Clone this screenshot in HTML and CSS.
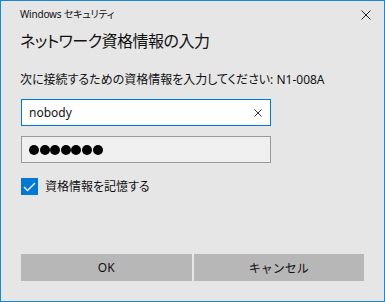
FILE: index.html
```html
<!DOCTYPE html>
<html lang="ja">

<head>
    <meta charset="UTF-8">
    <meta name="viewport" content="width=device-width, initial-scale=1.0">
    <title>Windows セキュリティ</title>
    <link rel="stylesheet" href="styles.css">
</head>

<body>
    <div class="dialog">
        <header class="titlebar">
            <span class="app-name">Windows セキュリティ</span>
            <span class="close" title="閉じる">
                <svg width="10" height="10" viewBox="0 0 10 10">
                    <path d="M0.5 0.5 L9.5 9.5 M9.5 0.5 L0.5 9.5" stroke="#222" stroke-width="1" fill="none" />
                </svg>
            </span>
        </header>
        <main class="content">
            <h1>ネットワーク資格情報の入力</h1>
            <p class="intro">次に接続するための資格情報を入力してください: N1-008A</p>

            <div class="field field-active">
                <span class="value">nobody</span>
                <span class="clear">
                    <svg width="8" height="8" viewBox="0 0 8 8">
                        <path d="M0.5 0.5 L7.5 7.5 M7.5 0.5 L0.5 7.5" stroke="#333" stroke-width="1" fill="none" />
                    </svg>
                </span>
            </div>

            <div class="field field-password">
                <span class="dot"></span><span class="dot"></span><span class="dot"></span><span class="dot"></span><span class="dot"></span><span class="dot"></span><span class="dot"></span>
            </div>

            <label class="remember">
                <span class="checkbox">
                    <svg width="13" height="10" viewBox="0 0 13 10">
                        <path d="M1 5 L4.5 8.5 L12 1" stroke="white" stroke-width="1.3" fill="none" />
                    </svg>
                </span>
                資格情報を記憶する
            </label>

            <div class="buttons">
                <button class="btn">OK</button>
                <button class="btn">キャンセル</button>
            </div>
        </main>
    </div>
</body>

</html>
```

FILE: styles.css
```css
body {
    margin: 0;
    padding: 0;
    font-family: "Noto Sans", "Noto Sans CJK JP", sans-serif;
    font-size: 12px;
    color: #111;
    background-color: #e6e6e6;
}

.dialog {
    width: 385px;
    height: 302px;
    box-sizing: border-box;
    border: 1px solid #1a86d6;
    background-color: #e6e6e6;
    display: flex;
    flex-direction: column;
}

.titlebar {
    height: 28px;
    padding: 0 13px 0 19px;
    display: flex;
    justify-content: space-between;
    align-items: flex-start;
}

.app-name {
    margin-top: 6px;
    font-size: 10px;
    line-height: 14px;
    letter-spacing: -0.2px;
    font-feature-settings: "palt";
}

.close {
    margin-top: 9px;
    height: 10px;
    display: flex;
}

.content {
    flex: 1;
    display: flex;
    flex-direction: column;
    padding: 0 20px 20px;
}

h1 {
    margin: 0 0 0 -1px;
    font-family: "Noto Sans CJK JP", sans-serif;
    font-weight: normal;
    font-size: 16px;
    line-height: 22px;
    letter-spacing: -0.5px;
    font-feature-settings: "palt";
}

.intro {
    margin: 21px 0 0 -1px;
    line-height: 16px;
    font-feature-settings: "palt";
}

.field {
    width: 250px;
    height: 27px;
    box-sizing: border-box;
    display: flex;
    align-items: center;
    padding: 0 8px 0 7px;
}

.field-active {
    margin-top: 11px;
    background-color: #fff;
    border: 1px solid #0078d7;
    justify-content: space-between;
}

.field-active .value {
    line-height: 16px;
}

.clear {
    display: flex;
}

.field-password {
    margin-top: 10px;
    background-color: #f0f0f0;
    border: 1px solid #999;
    gap: 0.6px;
}

.dot {
    width: 10px;
    height: 10px;
    border-radius: 50%;
    background-color: #000;
}

.remember {
    margin-top: 15px;
    display: flex;
    align-items: center;
    gap: 7px;
    line-height: 16px;
    font-feature-settings: "palt";
}

.checkbox {
    width: 17px;
    height: 17px;
    background-color: #0078d7;
    display: flex;
    align-items: center;
    justify-content: center;
}

.buttons {
    margin-top: auto;
    display: grid;
    grid-template-columns: 1fr 1fr;
    gap: 2px;
}

.btn {
    height: 27px;
    border: none;
    background-color: #b7b7b7;
    color: #111;
    font-family: "Noto Sans", "Noto Sans CJK JP", sans-serif;
    font-size: 12px;
    padding: 0;
}
```
